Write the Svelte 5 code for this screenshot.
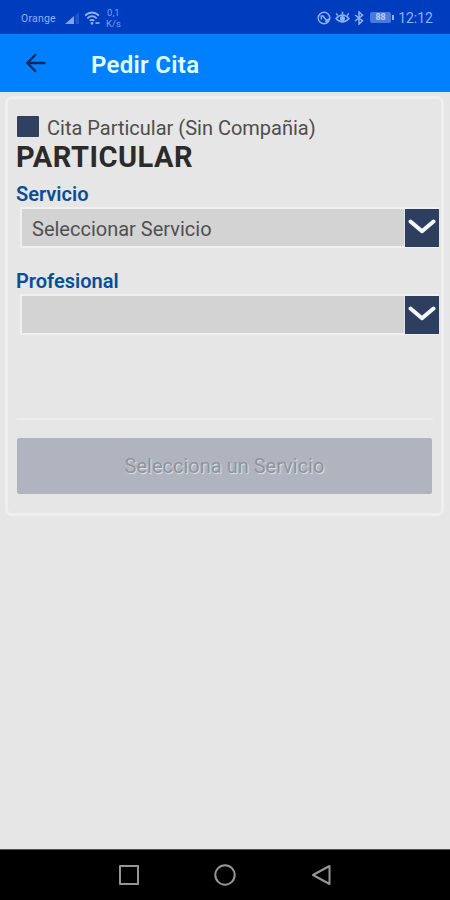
<script lang="ts">
	let particular = $state(true);

	const fields = [
		{ label: 'Servicio', value: 'Seleccionar Servicio' },
		{ label: 'Profesional', value: '' }
	];
</script>

<div class="screen">
	<div class="status">
		<span class="carrier">Orange</span>
		<svg class="signal" width="15" height="14" viewBox="0 0 15 14">
			<path d="M0 13 L9 5 V13 Z" fill="#7fa4f0" />
			<path d="M10.5 13 V4 L14 1 V13 Z" fill="#1f56cc" />
		</svg>
		<svg class="wifi" width="17" height="14" viewBox="0 0 17 14" fill="none" stroke="#8fb2f5" stroke-width="1.7">
			<path d="M1 4.5 Q8 -1.5 15 4.5" />
			<path d="M3.3 7.3 Q8 3 12.7 7.3" />
			<path d="M5.7 9.8 Q8 7.8 10.3 9.8" />
			<path d="M7 11.5 L8 12.8 L9 11.5" />
			<path d="M11.5 12 H15.5" />
		</svg>
		<span class="speed">0,1<br />K/s</span>

		<svg class="nfc" width="14" height="14" viewBox="0 0 14 14" fill="none" stroke="#8fb2f5" stroke-width="1.4">
			<circle cx="7" cy="7" r="5.8" />
			<path d="M4.3 8.5 V5 H6 L9.8 9.8" />
			<path d="M8.5 11 L12 8" stroke-width="2.2" />
		</svg>
		<svg class="eye" width="15" height="13" viewBox="0 0 15 13" fill="none" stroke="#8fb2f5" stroke-width="1.5">
			<path d="M1 7.5 Q7.5 0.5 14 7.5 Q7.5 14.5 1 7.5 Z" />
			<circle cx="7.5" cy="7.5" r="1.8" fill="#8fb2f5" />
			<path d="M2.8 4.5 L1.2 2.4 M7.5 3.5 V0.8 M12.2 4.5 L13.8 2.4" />
		</svg>
		<svg class="bluetooth" width="10" height="14" viewBox="0 0 10 14" fill="none" stroke="#8fb2f5" stroke-width="1.5">
			<path d="M1 4 L8.5 9.8 L5 13 V1 L8.5 4.2 L1 10" />
		</svg>
		<span class="battery">88</span>
		<span class="clock">12:12</span>
	</div>

	<header>
		<button class="back" aria-label="Volver">
			<svg width="22" height="20" viewBox="0 0 22 20" fill="none" stroke="#0b2a5c" stroke-width="2.3">
				<path d="M20.5 10 H2.5 M11 1.3 L2.3 10 L11 18.7" />
			</svg>
		</button>
		<h1>Pedir Cita</h1>
	</header>

	<main>
		<section class="card">
			<button class="check" role="checkbox" aria-checked={particular} onclick={() => (particular = !particular)}>
				<span class="box"></span>
				<span class="text">Cita Particular (Sin Compañia)</span>
			</button>
			<h2>PARTICULAR</h2>

			{#each fields as field}
				<div class="field">
					<span class="label">{field.label}</span>
					<button class="select" aria-label={field.label}>
						<span class="value">{field.value}</span>
						<span class="toggle">
							<svg width="28" height="16" viewBox="0 0 28 16" fill="none" stroke="#f4f8ff" stroke-width="4" stroke-linecap="round" stroke-linejoin="round">
								<path d="M2.5 2.5 L14 12.2 L25.5 2.5" />
							</svg>
						</span>
					</button>
				</div>
			{/each}

			<div class="footer">
				<button class="submit" disabled>Selecciona un Servicio</button>
			</div>
		</section>
	</main>

	<nav>
		<svg width="20" height="20" viewBox="0 0 20 20"><rect x="1" y="1" width="18" height="18" /></svg>
		<svg width="22" height="22" viewBox="0 0 22 22"><circle cx="11" cy="11" r="9.7" /></svg>
		<svg width="20" height="22" viewBox="0 0 20 22"><path d="M18.5 2 V20 L2 11 Z" /></svg>
	</nav>
</div>

<style>
	:global(body) {
		margin: 0;
		background: #e6e6e6;
	}

	.screen {
		display: flex;
		flex-direction: column;
		height: 900px;
		font-family: Roboto, 'Liberation Sans', sans-serif;
		background: #e6e6e6;
		overflow: hidden;
	}

	button {
		padding: 0;
		border: none;
		background: none;
		font: inherit;
		color: inherit;
		text-align: left;
	}

	svg {
		display: block;
		flex: none;
	}

	.status {
		display: flex;
		align-items: center;
		box-sizing: border-box;
		height: 34px;
		padding: 1px 17px 0 21px;
		background: #003cbe;
		color: #8fb2f5;
	}

	.carrier {
		width: 44px;
		padding-top: 1px;
		font-size: 10.5px;
		letter-spacing: 0.2px;
	}

	.wifi {
		margin-left: 4px;
	}

	.speed {
		margin-left: 5px;
		font-size: 9.5px;
		line-height: 11px;
		text-align: center;
		opacity: 0.85;
	}

	.nfc {
		margin-left: auto;
	}

	.eye {
		margin-left: 4px;
	}

	.bluetooth {
		margin-left: 4px;
	}

	.battery {
		position: relative;
		width: 21px;
		height: 11px;
		margin: 0 7px 0 6px;
		border-radius: 2px;
		background: #4a78dc;
		color: #b7cffb;
		font-size: 9px;
		font-weight: 700;
		line-height: 11px;
		text-align: center;
	}

	.battery::after {
		content: '';
		position: absolute;
		top: 3px;
		right: -3px;
		width: 2px;
		height: 5px;
		background: #8fb2f5;
	}

	.clock {
		font-size: 14px;
	}

	header {
		display: flex;
		align-items: center;
		box-sizing: border-box;
		height: 58px;
		padding-left: 25px;
		background: #0080ff;
	}

	.back {
		width: 66px;
	}

	h1 {
		margin: 3px 0 0;
		font-size: 24px;
		font-weight: 600;
		color: #e0ffff;
		letter-spacing: 0.3px;
	}

	main {
		flex: 1;
		padding: 4px 6px 0 5px;
	}

	.card {
		box-sizing: border-box;
		height: 420px;
		padding: 16px 2px 0 8px;
		border: 3px solid #efefef;
		border-radius: 7px;
	}

	.check {
		display: flex;
		align-items: center;
		gap: 8px;
		height: 22px;
		margin-left: 1px;
		font-size: 20px;
		color: #4e4e4e;
		white-space: nowrap;
	}

	.box {
		width: 22px;
		height: 21px;
		border-radius: 1px;
		background: #30415f;
	}

	.text {
		padding-top: 3px;
	}

	h2 {
		height: 44px;
		margin: 0;
		font-size: 29px;
		font-weight: 700;
		line-height: 41px;
		color: #2b2b2b;
		letter-spacing: 0.5px;
	}

	.field {
		height: 87px;
	}

	.label {
		display: block;
		height: 26px;
		font-size: 20px;
		font-weight: 600;
		line-height: 27px;
		color: #074e98;
	}

	.select {
		display: flex;
		justify-content: space-between;
		box-sizing: border-box;
		width: 419px;
		height: 41px;
		margin-left: 4px;
		border: 2px solid #f0f0f0;
		border-width: 2px 0 2px 2px;
	}

	.value {
		width: 382px;
		padding-left: 10px;
		box-sizing: border-box;
		background: #d3d3d3;
		font-size: 20px;
		line-height: 40px;
		color: #505050;
	}

	.toggle {
		display: flex;
		justify-content: center;
		box-sizing: border-box;
		width: 34px;
		margin-bottom: -1px;
		padding-top: 10px;
		background: #2d3e5e;
	}

	.footer {
		margin: 63px 6px 0 1px;
		padding-top: 18px;
		border-top: 2px solid #ededed;
	}

	.submit {
		width: 415px;
		height: 56px;
		border-radius: 2px;
		background: #b0b4bf;
		font-size: 20px;
		color: #8f939b;
		text-align: center;
		text-shadow: 1px 1px 1px #e2e4e8;
	}

	nav {
		display: flex;
		align-items: center;
		justify-content: center;
		gap: 75px;
		height: 51px;
		box-sizing: border-box;
		border-top: 1px solid #555;
		background: #000;
	}

	nav svg {
		fill: none;
		stroke: #969696;
		stroke-width: 2;
		stroke-linejoin: round;
	}
</style>
